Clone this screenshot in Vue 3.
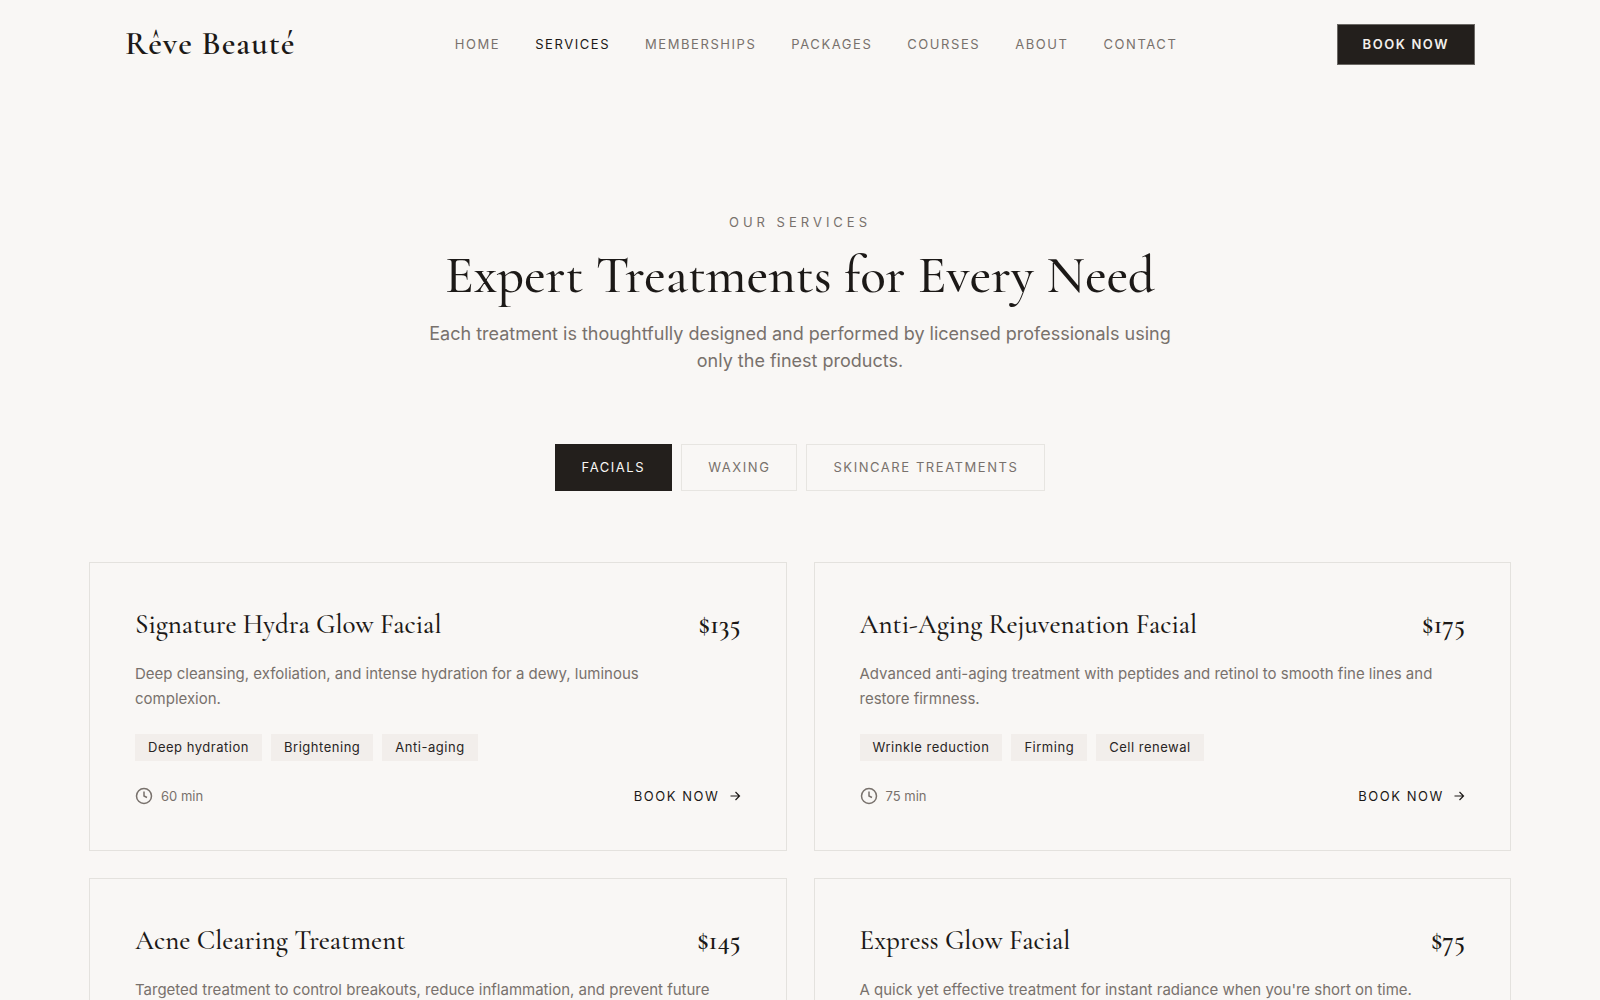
<script setup>
import { ref } from 'vue'

const links = ['Home', 'Services', 'Memberships', 'Packages', 'Courses', 'About', 'Contact']
const current = 'Services'

const categories = ['Facials', 'Waxing', 'Skincare Treatments']
const active = ref('Facials')

const services = [
  {
    name: 'Signature Hydra Glow Facial',
    price: '$135',
    text: 'Deep cleansing, exfoliation, and intense hydration for a dewy, luminous complexion.',
    tags: ['Deep hydration', 'Brightening', 'Anti-aging'],
    time: '60 min',
  },
  {
    name: 'Anti-Aging Rejuvenation Facial',
    price: '$175',
    text: 'Advanced anti-aging treatment with peptides and retinol to smooth fine lines and restore firmness.',
    tags: ['Wrinkle reduction', 'Firming', 'Cell renewal'],
    time: '75 min',
  },
  {
    name: 'Acne Clearing Treatment',
    price: '$145',
    text: 'Targeted treatment to control breakouts, reduce inflammation, and prevent future',
    tags: [],
    time: '',
  },
  {
    name: 'Express Glow Facial',
    price: '$75',
    text: "A quick yet effective treatment for instant radiance when you're short on time.",
    tags: [],
    time: '',
  },
]
</script>

<template>
  <div class="page">
    <header class="header">
      <a class="logo" href="#">Rêve Beauté</a>
      <nav class="nav">
        <a
          v-for="link in links"
          :key="link"
          href="#"
          class="nav-link"
          :class="{ current: link === current }"
        >{{ link }}</a>
      </nav>
      <button type="button" class="cta">Book Now</button>
    </header>

    <main class="main">
      <section class="intro">
        <p class="eyebrow">Our Services</p>
        <h1 class="heading">Expert Treatments for Every Need</h1>
        <p class="lead">
          Each treatment is thoughtfully designed and performed by licensed professionals using only
          the finest products.
        </p>
      </section>

      <div class="tabs">
        <button
          v-for="category in categories"
          :key="category"
          type="button"
          class="tab"
          :class="{ selected: category === active }"
          @click="active = category"
        >{{ category }}</button>
      </div>

      <section class="cards">
        <article v-for="service in services" :key="service.name" class="card">
          <div class="card-top">
            <h2 class="name">{{ service.name }}</h2>
            <span class="price">{{ service.price }}</span>
          </div>
          <p class="text">{{ service.text }}</p>
          <ul v-if="service.tags.length" class="tags">
            <li v-for="tag in service.tags" :key="tag" class="tag">{{ tag }}</li>
          </ul>
          <div v-if="service.time" class="card-foot">
            <span class="time">
              <svg class="clock" viewBox="0 0 24 24" aria-hidden="true">
                <circle cx="12" cy="12" r="10" />
                <path d="M12 6v6l4 2" />
              </svg>
              {{ service.time }}
            </span>
            <a class="book" href="#">
              Book Now
              <svg class="arrow" viewBox="0 0 12 12" aria-hidden="true">
                <path d="M1.5 6h9M6.5 2l4 4-4 4" />
              </svg>
            </a>
          </div>
        </article>
      </section>
    </main>
  </div>
</template>

<style>
html,
body {
  margin: 0;
  background: #f9f7f5;
}
</style>

<style scoped>
.page {
  height: 100vh;
  overflow: hidden;
  background: #f9f7f5;
  color: #1c1917;
  font-family: Inter, 'Liberation Sans', sans-serif;
  font-size: 13px;
}

.header {
  display: flex;
  align-items: center;
  justify-content: space-between;
  box-sizing: border-box;
  max-width: 1422px;
  height: 88px;
  margin: 0 auto;
  padding: 0 36px;
}

.logo,
.heading,
.name,
.price {
  font-family: 'Cormorant Garamond', 'Liberation Serif', serif;
}

.logo {
  color: inherit;
  font-size: 33px;
  font-weight: 600;
  line-height: 40px;
  letter-spacing: 0.03em;
  text-decoration: none;
}

.nav {
  display: flex;
  gap: 35px;
}

.nav-link,
.cta,
.tab,
.book {
  font-size: 13px;
  line-height: 20px;
  letter-spacing: 0.12em;
  text-transform: uppercase;
  text-decoration: none;
}

.nav-link {
  color: #78716c;
}

.nav-link.current {
  color: #1c1917;
}

.cta,
.tab {
  font-family: inherit;
  border-radius: 0;
  cursor: pointer;
}

.cta {
  height: 41px;
  padding: 0 25px;
  border: 1px solid #6b6864;
  background: #231f1c;
  color: #f3efeb;
  font-weight: 600;
}

.main {
  max-width: 1422px;
  margin: 0 auto;
  padding-top: 124px;
}

.intro {
  max-width: 747px;
  margin: 0 auto;
  text-align: center;
}

.eyebrow {
  margin: 0;
  color: #78716c;
  font-size: 13px;
  line-height: 20px;
  letter-spacing: 4px;
  text-transform: uppercase;
}

.heading {
  margin: 13px 0 15px;
  font-size: 53px;
  font-weight: 500;
  line-height: 60px;
}

.lead {
  margin: 0;
  color: #78716c;
  font-size: 18px;
  line-height: 27px;
}

.tabs {
  display: flex;
  justify-content: center;
  gap: 9px;
  margin: 70px 0 71px;
}

.tab {
  padding: 12px 26px 13px;
  border: 1px solid #e7e5e1;
  background: transparent;
  color: #78716c;
}

.tab.selected {
  border-color: #231f1c;
  background: #231f1c;
  color: #f9f7f5;
}

.cards {
  display: grid;
  grid-template-columns: 1fr 1fr;
  gap: 27px;
}

.card {
  padding: 45px;
  border: 1px solid #e4e2de;
}

.card-top {
  display: flex;
  align-items: baseline;
  justify-content: space-between;
}

.name,
.price {
  margin: 0;
  font-size: 27px;
  line-height: 34px;
}

.name {
  font-weight: 500;
}

.price {
  font-weight: 600;
}

.text {
  max-width: 580px;
  margin: 19px 0 0;
  color: #78716c;
  font-size: 15px;
  line-height: 25px;
}

.tags {
  display: flex;
  gap: 9px;
  margin: 23px 0 26px;
  padding: 0;
  list-style: none;
}

.tag {
  padding: 0 13px;
  background: #f2eeeb;
  color: #292524;
  line-height: 27px;
  letter-spacing: 0.04em;
}

.card-foot,
.time,
.book {
  display: flex;
  align-items: center;
}

.card-foot {
  justify-content: space-between;
}

.time {
  gap: 8px;
  color: #78716c;
  line-height: 18px;
}

.clock,
.arrow {
  fill: none;
  stroke: currentColor;
}

.clock {
  width: 18px;
  height: 18px;
  stroke-width: 2;
}

.book {
  gap: 9px;
  color: #1c1917;
  line-height: 18px;
}

.arrow {
  width: 12px;
  height: 12px;
  stroke-width: 1.2;
}
</style>
